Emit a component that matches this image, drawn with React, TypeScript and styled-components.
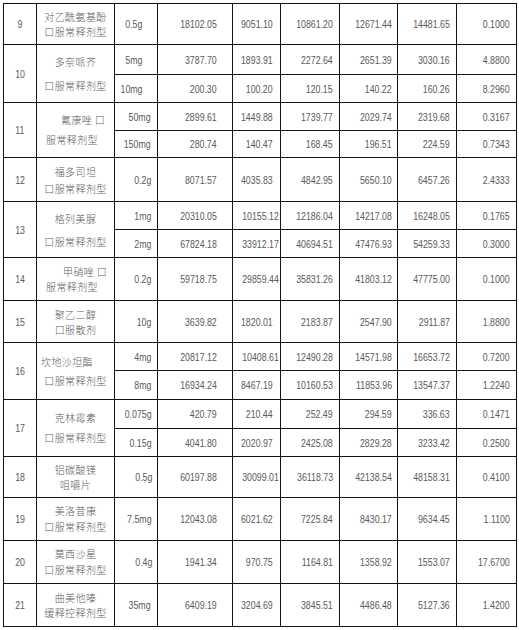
import React from "react";
import styled, { createGlobalStyle } from "styled-components";

const GlobalStyle = createGlobalStyle`
  html, body { margin: 0; padding: 0; background: #ffffff; }
  body { font-family: "Liberation Sans", Arial, sans-serif; }
`;

const NUM_FONT = `"Liberation Sans", Arial, sans-serif`;
const CJK_FONT = `"Noto Sans CJK SC", "Noto Sans CJK TC", sans-serif`;

const Page = styled.div`
  padding: 3px 0 0 3px;
`;

const Table = styled.table`
  border-collapse: collapse;
  table-layout: fixed;
  width: 513px;
`;

const Row = styled.tr<{ $h: number }>`
  height: ${(p) => p.$h}px;
`;

const Cell = styled.td`
  border: 1px solid #141414;
  padding: 0;
  color: #5a5a5a;
  vertical-align: middle;
  white-space: nowrap;
  overflow: hidden;
`;

const IndexCell = styled(Cell)`
  text-align: center;
  font-family: ${NUM_FONT};
  font-size: 11px;
`;

const NameCell = styled(Cell)<{ $lh: number }>`
  font-family: ${CJK_FONT};
  font-size: 10px;
  font-weight: 300;
  color: #606060;
  line-height: ${(p) => p.$lh}px;
  letter-spacing: 0.4px;
`;

const NameLine = styled.div<{ $indent?: number }>`
  text-align: ${(p) => (p.$indent === undefined ? "center" : "left")};
  padding-left: ${(p) => p.$indent ?? 0}px;
`;

const ValueCell = styled(Cell)<{ $pad: number }>`
  text-align: right;
  padding-right: ${(p) => p.$pad}px;
  font-family: ${NUM_FONT};
  font-size: 11px;
`;

/* narrow digits like the scanned document */
const Num = styled.span<{ $origin?: string }>`
  display: inline-block;
  transform: scaleX(0.8);
  transform-origin: ${(p) => p.$origin ?? "right"} center;
`;

type Line = { text: string; indent?: number };
type Spec = { spec: string; values: string[] };
type Item = {
  no: string;
  name: Line[];
  lh: number;
  heights: number[];
  specPad: number;
  specs: Spec[];
};

const COLS = [33, 78, 43, 75, 48, 59, 58, 59, 60];
const VALUE_PADS = [15, 7, 6, 5, 6, 6];

const items: Item[] = [
  {
    no: "9",
    name: [{ text: "对乙酰氨基酚" }, { text: "口服常释剂型" }],
    lh: 15,
    heights: [41],
    specPad: 15,
    specs: [{ spec: "0.5g", values: ["18102.05", "9051.10", "10861.20", "12671.44", "14481.65", "0.1000"] }],
  },
  {
    no: "10",
    name: [{ text: "多奈哌齐" }, { text: "口服常释剂型" }],
    lh: 24,
    heights: [30, 28],
    specPad: 15,
    specs: [
      { spec: "5mg", values: ["3787.70", "1893.91", "2272.64", "2651.39", "3030.16", "4.8800"] },
      { spec: "10mg", values: ["200.30", "100.20", "120.15", "140.22", "160.26", "8.2960"] },
    ],
  },
  {
    no: "11",
    name: [{ text: "氟康唑 口", indent: 24 }, { text: "服常释剂型", indent: 9 }],
    lh: 20,
    heights: [28, 27],
    specPad: 6,
    specs: [
      { spec: "50mg", values: ["2899.61", "1449.88", "1739.77", "2029.74", "2319.68", "0.3167"] },
      { spec: "150mg", values: ["280.74", "140.47", "168.45", "196.51", "224.59", "0.7343"] },
    ],
  },
  {
    no: "12",
    name: [{ text: "福多司坦" }, { text: "口服常释剂型" }],
    lh: 17,
    heights: [44],
    specPad: 6,
    specs: [{ spec: "0.2g", values: ["8071.57", "4035.83", "4842.95", "5650.10", "6457.26", "2.4333"] }],
  },
  {
    no: "13",
    name: [{ text: "格列美脲" }, { text: "口服常释剂型" }],
    lh: 23,
    heights: [28, 28],
    specPad: 6,
    specs: [
      { spec: "1mg", values: ["20310.05", "10155.12", "12186.04", "14217.08", "16248.05", "0.1765"] },
      { spec: "2mg", values: ["67824.18", "33912.17", "40694.51", "47476.93", "54259.33", "0.3000"] },
    ],
  },
  {
    no: "14",
    name: [{ text: "甲硝唑 口", indent: 26 }, { text: "服常释剂型", indent: 9 }],
    lh: 15,
    heights: [43],
    specPad: 6,
    specs: [{ spec: "0.2g", values: ["59718.75", "29859.44", "35831.26", "41803.12", "47775.00", "0.1000"] }],
  },
  {
    no: "15",
    name: [{ text: "聚乙二醇" }, { text: "口服散剂" }],
    lh: 15,
    heights: [42],
    specPad: 6,
    specs: [{ spec: "10g", values: ["3639.82", "1820.01", "2183.87", "2547.90", "2911.87", "1.8800"] }],
  },
  {
    no: "16",
    name: [{ text: "坎地沙坦酯", indent: 4 }, { text: "口服常释剂型" }],
    lh: 19,
    heights: [28, 29],
    specPad: 6,
    specs: [
      { spec: "4mg", values: ["20817.12", "10408.61", "12490.28", "14571.98", "16653.72", "0.7200"] },
      { spec: "8mg", values: ["16934.24", "8467.19", "10160.53", "11853.96", "13547.37", "1.2240"] },
    ],
  },
  {
    no: "17",
    name: [{ text: "克林霉素" }, { text: "口服常释剂型" }],
    lh: 20,
    heights: [29, 28],
    specPad: 5,
    specs: [
      { spec: "0.075g", values: ["420.79", "210.44", "252.49", "294.59", "336.63", "0.1471"] },
      { spec: "0.15g", values: ["4041.80", "2020.97", "2425.08", "2829.28", "3233.42", "0.2500"] },
    ],
  },
  {
    no: "18",
    name: [{ text: "铝碳酸镁" }, { text: "咀嚼片" }],
    lh: 15,
    heights: [41],
    specPad: 5,
    specs: [{ spec: "0.5g", values: ["60197.88", "30099.01", "36118.73", "42138.54", "48158.31", "0.4100"] }],
  },
  {
    no: "19",
    name: [{ text: "美洛昔康" }, { text: "口服常释剂型" }],
    lh: 16,
    heights: [43],
    specPad: 5,
    specs: [{ spec: "7.5mg", values: ["12043.08", "6021.62", "7225.84", "8430.17", "9634.45", "1.1100"] }],
  },
  {
    no: "20",
    name: [{ text: "莫西沙星" }, { text: "口服常释剂型" }],
    lh: 16,
    heights: [43],
    specPad: 5,
    specs: [{ spec: "0.4g", values: ["1941.34", "970.75", "1164.81", "1358.92", "1553.07", "17.6700"] }],
  },
  {
    no: "21",
    name: [{ text: "曲美他嗪" }, { text: "缓释控释剂型" }],
    lh: 15,
    heights: [43],
    specPad: 6,
    specs: [{ spec: "35mg", values: ["6409.19", "3204.69", "3845.51", "4486.48", "5127.36", "1.4200"] }],
  },
];

export default function App() {
  return (
    <>
      <GlobalStyle />
      <Page>
        <Table>
          <colgroup>
            {COLS.map((w, i) => (
              <col key={i} style={{ width: w }} />
            ))}
          </colgroup>
          <tbody>
            {items.map((item) =>
              item.specs.map((s, i) => (
                <Row key={`${item.no}-${i}`} $h={item.heights[i]}>
                  {i === 0 && (
                    <>
                      <IndexCell rowSpan={item.specs.length}>
                        <Num $origin="center">{item.no}</Num>
                      </IndexCell>
                      <NameCell rowSpan={item.specs.length} $lh={item.lh}>
                        {item.name.map((l, k) => (
                          <NameLine key={k} $indent={l.indent}>
                            {l.text}
                          </NameLine>
                        ))}
                      </NameCell>
                    </>
                  )}
                  <ValueCell $pad={item.specPad}>
                    <Num>{s.spec}</Num>
                  </ValueCell>
                  {s.values.map((v, k) => (
                    <ValueCell key={k} $pad={VALUE_PADS[k]}>
                      <Num>{v}</Num>
                    </ValueCell>
                  ))}
                </Row>
              ))
            )}
          </tbody>
        </Table>
      </Page>
    </>
  );
}
